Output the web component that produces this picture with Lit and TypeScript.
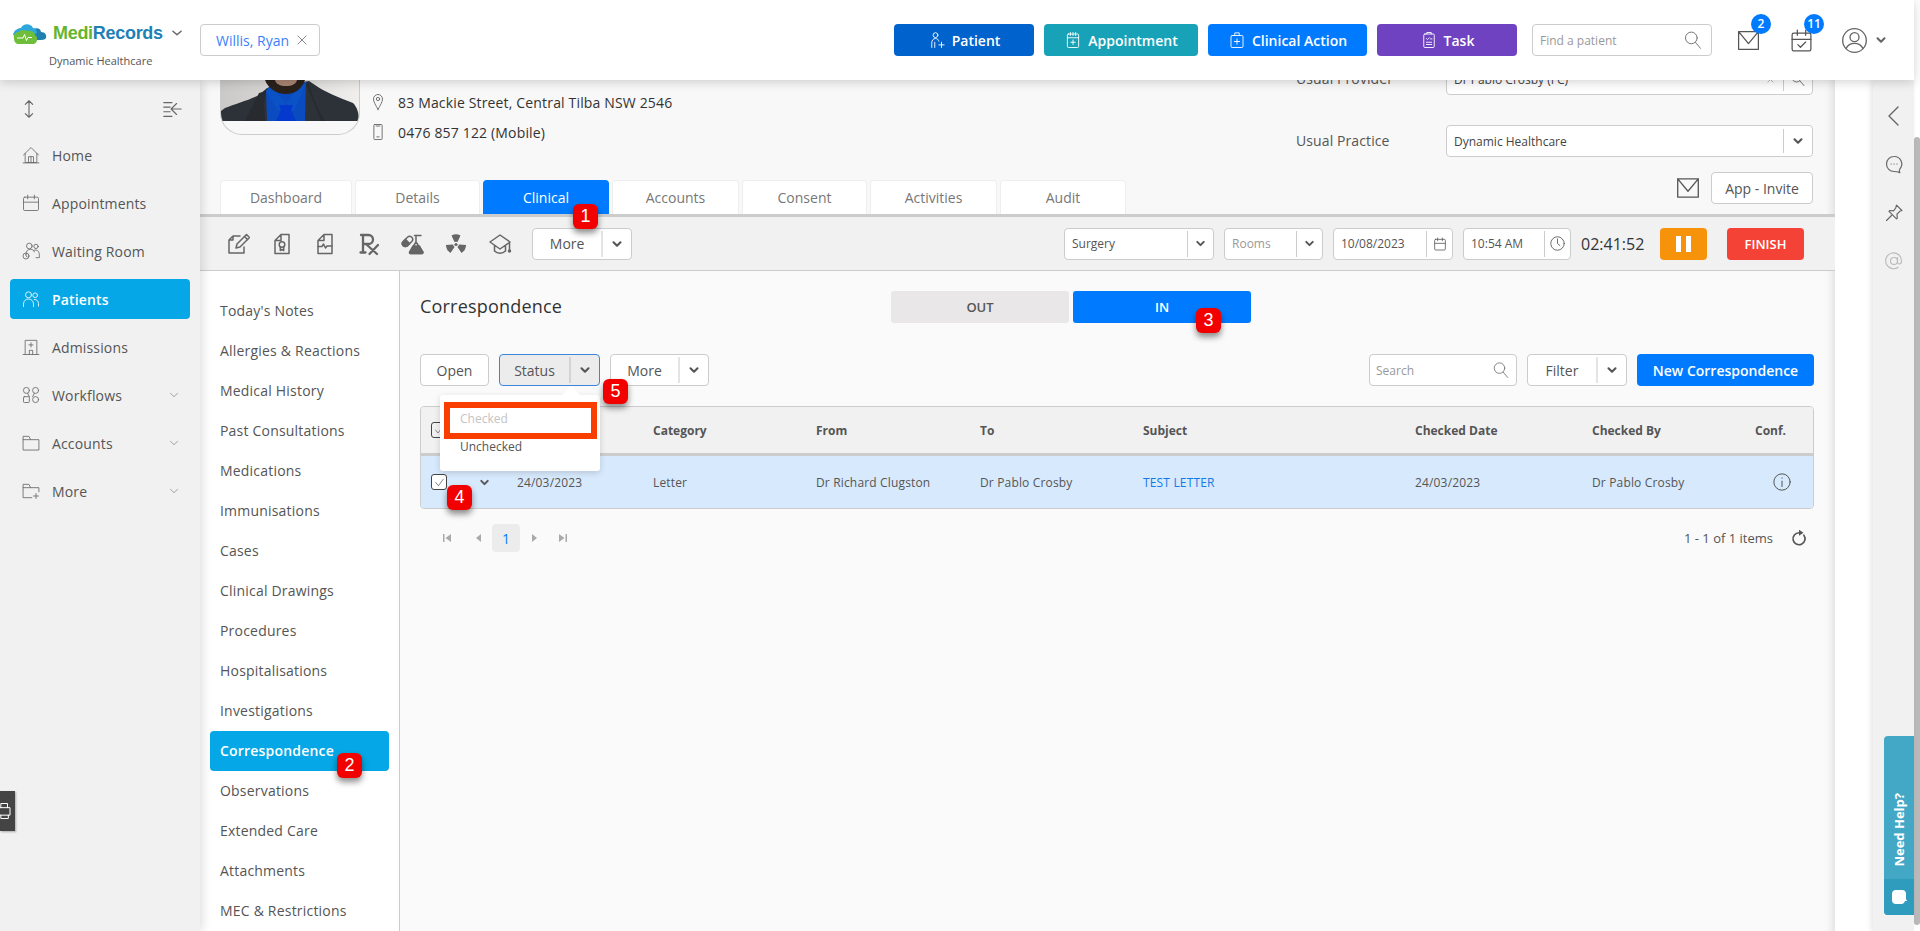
import { LitElement, html, css, svg } from "lit";
import { customElement } from "lit/decorators.js";

const ico = (body: unknown, size = 24, cls = "") => html`<svg class="ic ${cls}" width=${size} height=${size} viewBox="0 0 24 24" fill="none" stroke="currentColor" stroke-width="1.2" stroke-linecap="round" stroke-linejoin="round">${body}</svg>`;

const blade = "M7.500 3.500Q12 1 16.500 3.500L13.500 10Q12 9.400 10.500 10Z";

const P = {
  updown: svg`<path d="M12 3v18M8 7l4-4 4 4M8 17l4 4 4-4"/>`,
  collapse: svg`<path d="M3 5h9M3 10h7M3 15h7M3 20h9M22 12H12M17 6l-6 6 6 6"/>`,
  home: svg`<path d="M3 12 12 3l9 9M5 10v11h14V10M9 21v-7h6v7M12 14v7"/><path d="M2.5 21.5h19"/>`,
  cal: svg`<rect x="3" y="5" width="18" height="16" rx="1.5"/><path d="M3 11h18M8 2.5V7M16 2.5V7"/>`,
  wait: svg`<circle cx="10" cy="6" r="3.4"/><circle cx="18" cy="6.5" r="2.6"/><path d="M6 16c0-4 2-6 5-6s4.5 1 5 3M16 11c3-1 6 1 6 6v3h-4"/><circle cx="6" cy="18" r="3.6"/><path d="M6 16v2l1.5 1"/>`,
  pat: svg`<circle cx="9" cy="7" r="3.6"/><circle cx="17" cy="7.5" r="2.8"/><path d="M3 21v-3c0-4 3-6 6-6s6 2 6 6v3M16 12.5c3 0 5 2 5 5v3"/>`,
  adm: svg`<path d="M5 21V4h14v17M2.5 21h19M10 21v-5h4v5M12 7v5M9.5 9.5h5"/>`,
  flow: svg`<circle cx="6.5" cy="6.5" r="3.6"/><circle cx="17.5" cy="6.5" r="3.6"/><rect x="3" y="14" width="7" height="7" rx="1"/><circle cx="17.5" cy="17.5" r="3.6"/><path d="M8 10l2 4M16 10l-2 4"/>`,
  folder: svg`<path d="M2.5 20V4h7l2 4h10v12zM2.5 8h9"/>`,
  folderPlus: svg`<path d="M13 20H2.5V4h7l2 4h10v5M2.5 8h9M18 15v6M15 18h6"/>`,
  pin: svg`<path d="M12 22c-3-6-6-10-6-14a6 6 0 0 1 12 0c0 4-3 8-6 14z"/><circle cx="12" cy="8" r="2.2"/>`,
  phone: svg`<rect x="6.5" y="2" width="11" height="20" rx="1"/><path d="M10.5 18.5h3M9.5 4h5"/>`,
  chev: svg`<path d="M6 9l6 6 6-6"/>`,
  x: svg`<path d="M5 5l14 14M19 5 5 19"/>`,
  search: svg`<circle cx="10" cy="9.5" r="7"/><path d="M15 15l6 7"/>`,
  patAdd: svg`<circle cx="10" cy="5.5" r="3.2"/><path d="M5 22v-6c0-3.5 2-6 5-6 2.500 0 4 1.500 4.500 3.500M9 22v-7M18 15v7M14.500 18.500h7"/>`,
  appt: svg`<rect x="4.500" y="4" width="15" height="18" rx="1.500"/><path d="M4.500 9h15M8.500 2v4M12 2v4M15.500 2v4M12 12v6M9 15h6"/>`,
  clin: svg`<rect x="4" y="6" width="16" height="16" rx="1.500"/><path d="M9 6V2.500h6V6M12 10.500v7M8.500 14h7"/>`,
  task: svg`<rect x="5" y="4" width="14" height="18" rx="1.500"/><path d="M9 4V2h6v2M8.500 10l1.500 1.500 2.500-2.500M14 10.500h2M8.500 15h7M8.500 18h7"/>`,
  mail: svg`<path d="M2.500 3.500h19v17h-19zM2.500 3.500 12 15l9.500-11.500"/>`,
  taskDone: svg`<rect x="3" y="5" width="18" height="17" rx="1.500"/><path d="M3 11h18M8 2v5M16 2v5M8.500 16l2.500 2.500 5-5"/>`,
  user: svg`<circle cx="12" cy="12" r="10.500"/><circle cx="12" cy="9" r="4"/><path d="M4.500 19c1.500-3 4.500-4.500 7.500-4.500s6 1.500 7.500 4.500"/>`,
  clock: svg`<circle cx="12" cy="12" r="9.500"/><path d="M12 5.500V12l3.500 3"/>`,
  note: svg`<path d="M14 4H7L3 8v13h15v-6M7 4v4H3"/><path d="M10 16l1-4 9.500-9.500 3 3L14 15z" /><path d="M18.500 4.500l3 3"/>`,
  cert: svg`<path d="M11 2.500h8v19H5V8.500zM11 2.500v6H5"/><circle cx="12" cy="12.500" r="2.800"/><path d="M10.300 15v3.500l1.700-1 1.700 1V15"/>`,
  report: svg`<path d="M11 2.500h8v19H5V8.500zM11 2.500v6H5"/><path d="M5 14.500h4l1.500-2.500 2 4 1.500-2H19"/>`,
  rx: svg`<path d="M4 3h7.500a4.500 4.500 0 0 1 0 9H6M6 3v17.500M3.500 20.500h5M9 12l11 10M21 13l-8.500 9" stroke-width="2.300"/>`,
  flask: svg`<path d="M13.500 3.500h6.500M15 3.500v6.500L21.800 20a1 1 0 0 1-.8 1.500H9.500a1 1 0 0 1-.8-1.500l6.300-10"/><path d="M12 14h6.500l3.500 6.500-.8 1H9l-.5-1z" fill="currentColor"/><g transform="rotate(-45 6.500 9.500)"><rect x="0.500" y="6.500" width="12" height="6" rx="3"/><path d="M3.500 6.500h3v6h-3a3 3 0 0 1 0-6z" fill="currentColor"/></g>`,
  rad: svg`<g fill="currentColor" stroke="none"><path d=${blade}/><path d=${blade} transform="rotate(120 12 12.500)"/><path d=${blade} transform="rotate(240 12 12.500)"/><circle cx="12" cy="12.500" r="1.600"/></g>`,
  grad: svg`<path d="M12 3 2 10l10 7 10-7zM6.500 13.500V19c3 3 8 3 11 0v-5.500M21.500 10.500v7"/><circle cx="21.500" cy="19" r="1" fill="currentColor"/>`,
  calSmall: svg`<rect x="4" y="5" width="16" height="16" rx="1.500"/><path d="M4 11h16M8.500 3v4M15.500 3v4"/>`,
  info: svg`<circle cx="12" cy="12" r="9.800"/><path d="M12 11v6.500M12 7v.5"/>`,
  refresh: svg`<path d="M18.500 8.300A8 8 0 1 1 12 5" stroke-width="2.200"/><path d="M12 1v8l6-4z" fill="currentColor" stroke="none"/>`,
  left: svg`<path d="M16 3 7 12l9 9"/>`,
  chat: svg`<path d="M12 3a9 9 0 1 0 0 18c2.500 0 4 0 7 1.500-1-2-1-3 0-4.500A9 9 0 0 0 12 3z"/><path d="M8.500 12h.2M12 12h.2M15.500 12h.2"/>`,
  pushpin: svg`<path d="M15 2.500 21.500 9l-2.500 1-3.500 3.500.5 4.500-1 1-9-9 1-1 4.500.5L14 6z"/><path d="M9 15l-6 6"/>`,
  at: svg`<circle cx="12" cy="12" r="4.200"/><path d="M16.200 8v5.500c0 3 4.800 3 4.800-1.500a9.500 9.500 0 1 0-4 7.500"/>`,
  print: svg`<rect x="3" y="8" width="15" height="9" /><path d="M7 8V3h8v5M7 17v4h9v-4"/>`,
};

const mainNav: [string, keyof typeof P, boolean, boolean][] = [
  ["Home", "home", false, false],
  ["Appointments", "cal", false, false],
  ["Waiting Room", "wait", false, false],
  ["Patients", "pat", true, false],
  ["Admissions", "adm", false, false],
  ["Workflows", "flow", false, true],
  ["Accounts", "folder", false, true],
  ["More", "folderPlus", false, true],
];
const clinNav = ["Today's Notes", "Allergies & Reactions", "Medical History", "Past Consultations", "Medications", "Immunisations", "Cases", "Clinical Drawings", "Procedures", "Hospitalisations", "Investigations", "Correspondence", "Observations", "Extended Care", "Attachments", "MEC & Restrictions"];
const tabs: [string, number][] = [["Dashboard", 132], ["Details", 125], ["Clinical", 126], ["Accounts", 127], ["Consent", 125], ["Activities", 127], ["Audit", 126]];
const actions: [string, keyof typeof P, string][] = [["Patient", "patAdd", "a1"], ["Appointment", "appt", "a2"], ["Clinical Action", "clin", "a3"], ["Task", "task", "a4"]];

const split = (label: string, cls = "") => html`<div class="split ${cls}"><span class="lab">${label}</span><span class="car">${ico(P.chev, 14, "bold")}</span></div>`;
const field = (label: string, w: string, extra: unknown = null, cls = "") => html`<div class="field ${w} ${cls}"><span class="val">${label}</span>${extra}</div>`;

@customElement("app-root")
export class AppRoot extends LitElement {
  static styles = css`
    :host { display: block; width: 1920px; height: 931px; overflow: hidden; font-family: "Open Sans", sans-serif; color: #555; background: #fff; position: relative; font-size: 14px; }
    * { box-sizing: border-box; }
    .ic { display: block; flex: none; }
    .ic.bold { stroke-width: 3.6; }
    .page { display: flex; height: 931px; }
    .left { width: 1914px; display: flex; flex-direction: column; }
    .strip { width: 6px; padding: 137px 0 6px; }
    .thumb { height: 100%; background: #b9b9b9; border-radius: 3px; }

    header { height: 80px; flex: none; background: #fff; box-shadow: 0 2px 10px rgba(0,0,0,.18); position: relative; z-index: 5; display: flex; align-items: center; padding: 0 26px 0 11px; }
    .brand { width: 189px; height: 48px; position: relative; flex: none; }
    .logoRow { display: flex; align-items: center; height: 26px; margin-top: 0; }
    .logoName { font: bold 18px/26px "Liberation Sans", Arial, sans-serif; letter-spacing: -.3px; margin-left: 6px; color: #1f80b6; }
    .logoName b { color: #64b52f; }
    .logoChev { color: #666; margin-left: 7px; }
    .sub { font-size: 11px; line-height: 14px; color: #555; margin: 8px 0 0 38px; }
    .brandIn { margin-top: 4px; }
    .ptag { width: 120px; height: 32px; border: 1px solid #ccc; border-radius: 4px; display: flex; align-items: center; padding-left: 15px; gap: 6px; color: #3a7ffb; font-size: 14px; }
    .ptag .ic { color: #555; }
    .actions { margin-left: auto; display: flex; gap: 10px; }
    .act { height: 32px; border-radius: 4px; color: #fff; font-weight: 600; font-size: 14px; display: flex; align-items: center; justify-content: center; gap: 6px; }
    .a1 { width: 140px; background: #0062cc; } .a2 { width: 154px; background: #17a2b8; } .a3 { width: 159px; background: #007bff; } .a4 { width: 140px; background: #6f42c1; }
    .find { width: 180px; height: 32px; margin-left: 15px; border: 1px solid #ccc; border-radius: 4px; display: flex; align-items: center; justify-content: space-between; padding: 0 8px 0 7px; font-size: 12px; color: #999; }
    .find .ic { color: #777; }
    .notif { position: relative; margin-left: 24px; color: #555; }
    .notif.second { margin-left: 28px; }
    .count { position: absolute; top: -14px; right: -10px; min-width: 20px; height: 20px; border-radius: 10px; background: #007bff; color: #fff; font-size: 12px; font-weight: 600; display: flex; align-items: center; justify-content: center; }
    .userBox { display: flex; align-items: center; margin-left: 27px; color: #666; gap: 6px; }

    .body { flex: 1; display: flex; min-height: 0; }
    .side { width: 200px; flex: none; background: #f1f1f1; box-shadow: 2px 0 10px rgba(0,0,0,.14); position: relative; z-index: 3; padding-top: 16px; }
    .sideTop { display: flex; justify-content: space-between; padding: 0 17px 0 18px; color: #666; margin-bottom: 13px; height: 26px; align-items: center; }
    .nav { height: 40px; margin: 0 10px 8px; border-radius: 4px; display: flex; align-items: center; padding: 0 10px 0 11px; gap: 11px; font-size: 14px; font-weight: 500; letter-spacing: .15px; color: #555; }
    .nav .ic { color: #666; stroke-width: 1; }
    .nav.on { background: #05a7e6; color: #fff; font-weight: 600; }
    .nav.on .ic { color: #fff; }
    .nav .more { margin-left: auto; color: #888; margin-right: -1px; }
    .gadget { position: absolute; left: 0; top: 711px; width: 15px; height: 40px; background: #444; color: #fff; overflow: hidden; box-shadow: 1px 1px 2px rgba(0,0,0,.3); display: flex; align-items: center; justify-content: flex-end; }

    main { width: 1635px; flex: none; background: #f8f8f8; display: flex; flex-direction: column; box-shadow: inset -10px 0 10px -8px rgba(0,0,0,.12); }
    .pat { height: 100px; flex: none; display: flex; padding-left: 20px; }
    .photo { width: 140px; height: 55px; border: 1px solid #ccc; border-top: 0; border-radius: 0 0 22px 22px; overflow: hidden; flex: none; }
    .photo svg { display: block; }
    .contact { margin-left: 9px; padding-top: 7px; color: #333; font-weight: 500; letter-spacing: .16px; }
    .cl { height: 30px; display: flex; align-items: center; gap: 11px; }
    .cl .ic { color: #666; }
    .form { margin-left: auto; margin-right: 22px; margin-top: -17px; width: 517px; display: flex; flex-direction: column; gap: 30px; }
    .frow { display: flex; align-items: center; justify-content: space-between; height: 32px; font-size: 14px; font-weight: 500; letter-spacing: .1px; color: #555; }
    .frow > span { padding-bottom: 2px; }
    .sel { width: 367px; height: 32px; border: 1px solid #ccc; border-radius: 4px; background: #fff; display: flex; align-items: center; padding-left: 7px; font-size: 12px; color: #444; letter-spacing: 0; }
    .sel .grow { flex: 1; }
    .sel .x { color: #666; margin-right: 8px; }
    .sel .tail { width: 29px; height: 24px; border-left: 1px solid #ccc; display: flex; align-items: center; justify-content: center; color: #555; }
    .tabsRow { height: 36px; flex: none; display: flex; padding-left: 20px; gap: 3px; border-bottom: 3px solid #ccc; padding-top: 0; position: relative; box-sizing: content-box; height: 34px; }
    .tab { height: 34px; background: #fff; border: 1px solid #eee; border-bottom: 0; border-radius: 4px 4px 0 0; display: flex; align-items: center; justify-content: center; color: #777; }
    .tab.on { background: #007bff; color: #fff; border-color: #007bff; font-weight: 500; }
    .invite { margin-left: auto; margin-right: 22px; margin-top: -8px; height: 32px; display: flex; gap: 10px; align-items: center; }
    .invite .ic { color: #555; }
    .btn { height: 32px; border: 1px solid #ccc; border-radius: 4px; background: #fff; display: flex; align-items: center; justify-content: center; color: #555; font-weight: 500; }
    .invBtn { width: 102px; }
    .tools { height: 54px; flex: none; background: #f1f1f1; border-bottom: 1px solid #ccc; display: flex; align-items: center; padding: 0 31px 0 26px; }
    .toolIcons { display: flex; gap: 19.7px; color: #666; }
    .toolIcons .ic { stroke-width: 1.5; }
    .split { height: 32px; background: #fff; border: 1px solid #ccc; border-radius: 4px; display: flex; align-items: center; font-weight: 500; color: #555; }
    .split .lab { flex: 1; text-align: center; }
    .split .car { width: 30px; height: 26px; border-left: 2px solid #e4e4e4; display: flex; align-items: center; justify-content: center; color: #555; }
    .tm { width: 100px; margin-left: 20px; }
    .rt { margin-left: auto; display: flex; align-items: center; gap: 10px; }
    .field { height: 32px; background: #fff; border: 1px solid #ccc; border-radius: 4px; display: flex; align-items: center; padding-left: 7px; font-size: 12px; color: #555; }
    .field .val { flex: 1; }
    .field .tail { width: 26px; height: 26px; border-left: 1px solid #ccc; display: flex; align-items: center; justify-content: center; color: #555; }
    .w150 { width: 150px; } .w99 { width: 99px; } .w120 { width: 120px; } .w108 { width: 108px; }
    .muted .val { color: #999; }
    .timer { width: 64px; font-size: 16px; font-weight: 500; color: #333; white-space: nowrap; }
    .pause { width: 47px; height: 32px; background: #f7930a; border-radius: 4px; display: flex; align-items: center; justify-content: center; gap: 5px; margin-left: 5px; }
    .pause i { width: 5px; height: 16px; background: #fff; display: block; }
    .finish { width: 77px; height: 32px; background: #f44336; border-radius: 4px; color: #fff; font-weight: 600; font-size: 13px; display: flex; align-items: center; justify-content: center; margin-left: 10px; }

    .work { flex: 1; display: flex; min-height: 0; }
    .cnav { width: 200px; flex: none; background: #fff; border-right: 1px solid #ccc; padding-top: 20px; box-shadow: none; }
    .ci { height: 40px; margin: 0 10px; padding: 0 0 1px 10px; display: flex; align-items: center; border-radius: 4px; font-size: 14px; font-weight: 500; letter-spacing: .2px; color: #555; white-space: nowrap; }
    .ci.on { background: #05a7e6; color: #fff; font-weight: 600; }
    .cont { flex: 1; padding: 20px 21px 0 20px; position: relative; background: #fafafa; box-shadow: inset -10px 0 10px -8px rgba(0,0,0,.12); }
    .ttl { display: flex; align-items: center; height: 32px; gap: 4px; }
    .ttl h2 { margin: 0 0 2px; width: 467px; font-size: 18px; font-weight: 500; color: #333; letter-spacing: .2px; }
    .seg { width: 178px; height: 32px; border-radius: 3px; display: flex; align-items: center; justify-content: center; font-size: 13px; font-weight: 600; }
    .seg.off { background: #e9e7e7; color: #555; }
    .seg.onn { background: #007bff; color: #fff; }
    .bar { display: flex; margin-top: 31px; height: 32px; gap: 10px; position: relative; }
    .open { width: 69px; }
    .stat { width: 101px; background: #ececec; border-color: #3b86d8; }
    .stat .car { border-left-color: #d3d3d3; }
    .mor { width: 99px; }
    .tsearch { width: 148px; height: 32px; margin-left: auto; background: #fff; border: 1px solid #ccc; border-radius: 4px; display: flex; align-items: center; justify-content: space-between; padding: 0 6px; font-size: 12px; color: #999; }
    .tsearch .ic { color: #777; }
    .filt { width: 100px; }
    .newc { width: 177px; height: 32px; border-radius: 4px; background: #007bff; color: #fff; font-weight: 600; display: flex; align-items: center; justify-content: center; font-size: 14px; }
    .tbl { margin-top: 20px; border: 1px solid #ccc; border-radius: 4px; overflow: hidden; }
    .tr { display: grid; grid-template-columns: 45px 41px 136px 163px 164px 163px 272px 177px 163px 1fr; padding-left: 10px; align-items: center; font-size: 12px; color: #555; }
    .th { height: 49px; background: #f1f1f1; border-bottom: 3px solid #ccc; font-weight: 700; color: #555; }
    .td { height: 52px; background: #d7e9fc; font-weight: 500; letter-spacing: .16px; }
    .cb { width: 16px; height: 16px; border: 1px solid #444; border-radius: 3px; background: #fff; color: #444; display: flex; align-items: center; justify-content: center; }
    .th .cb { background: transparent; }
    .rowCh { margin-left: 2px; display: block; }
    .lnk { color: #1479e6; }
    .infoI { color: #555; margin-left: 17px; }
    .pg { display: flex; align-items: center; margin-top: 15px; height: 28px; color: #aaa; font-size: 12px; padding-left: 20px; }
    .pgI { width: 14px; display: flex; align-items: center; justify-content: center; }
    .pgI svg { display: block; }
    .pgGap { margin-left: 17px; }
    .pgGap2 { margin-left: 14px; }
    .pg1 { width: 28px; height: 28px; background: #ececec; border-radius: 4px; color: #007bff; font-size: 14px; display: flex; align-items: center; justify-content: center; margin: 0 8px 0 7px; }
    .cnt { margin-left: auto; color: #555; font-size: 13px; font-weight: 500; margin-right: 17px; }
    .rf { color: #555; margin-right: 6px; }

    .menu { position: absolute; left: 40px; top: 124px; width: 160px; height: 76px; background: #fff; border-radius: 3px; box-shadow: 0 2px 6px rgba(0,0,0,.15); padding: 7px 3px 7px 4px; font-size: 12px; font-weight: 500; z-index: 2; }
    .menu::before { content: ""; position: absolute; left: 122px; top: -9px; border-left: 9px solid transparent; border-right: 9px solid transparent; border-bottom: 9px solid #fff; }
    .mchk { height: 37px; border: 6px solid #fa3e00; padding: 0 0 4px 10px; color: #c4c4c4; display: flex; align-items: center; }
    .munc { height: 18px; margin-top: -2px; padding-left: 16px; display: flex; align-items: center; color: #555; }

    .gap { width: 38px; flex: none; background: #fff; }
    .rail { width: 41px; flex: none; background: #f1f1f1; box-shadow: -2px 0 5px rgba(0,0,0,.1); display: flex; flex-direction: column; align-items: center; padding-top: 24px; color: #666; position: relative; z-index: 1; }
    .rail .ic { stroke-width: 1.4; }
    .rail .ic + .ic { margin-top: 28.5px; }
    .rail .first { margin-bottom: -2.5px; }
    .rail .fade { color: #bbb; }
    .help { margin-top: auto; margin-bottom: 16px; align-self: flex-end; width: 30px; height: 179px; flex: none; background: #43a7c6; border-radius: 4px 0 0 4px; display: flex; flex-direction: column; color: #fff; overflow: hidden; }
    .helpT { flex: 1; display: flex; align-items: flex-end; justify-content: center; padding-bottom: 12px; }
    .helpT span { writing-mode: vertical-rl; transform: rotate(180deg); font-size: 13px; font-weight: 700; white-space: nowrap; }
    .helpB { height: 36px; background: #2f9bbd; display: flex; align-items: center; justify-content: center; }

    .mark { position: absolute; width: 25px; height: 25px; border-radius: 6px; background: #f20000; color: #fff; font: 18px/25px "Liberation Sans", Arial, sans-serif; text-align: center; box-shadow: 0 4px 6px rgba(0,0,0,.45); z-index: 4; }
    .m1 { left: 573px; top: 204px; } .m2 { left: 337px; top: 753px; } .m3 { left: 1196px; top: 308px; } .m4 { left: 447px; top: 485px; } .m5 { left: 603px; top: 379px; }
  `;

  render() {
    return html`
      <div class="page">
        <div class="left">
          <header>
            <div class="brand"><div class="brandIn">
              <div class="logoRow">
                <svg width="36" height="21" viewBox="0 0 36 21"><path d="M23 6c3-2 7 0 7 3 4 0 6 3 5 6-1 2-4 2-8 2H20z" fill="#1f7fb0"/><path d="M2 12C3 7 7 5 10 5c2-5 10-5 12 0 2 0 4 2 4 5l-4 2H4z" fill="#2ea7dc"/><path d="M3 15c-1-3 1-6 5-6 1-2 5-3 8-1 4-1 8 1 8 4 3 1 3 8-1 9H8c-3 0-5-2-5-6z" fill="#6fbe3a"/><path d="M6 15h6l1.500-3.500 2 6 1.500-3h4" fill="none" stroke="#fff" stroke-width="1"/></svg>
                <span class="logoName"><b>Medi</b>Records</span>
                <span class="logoChev">${ico(svg`<path d="M5 9l7 6 7-6" stroke-width="2.600"/>`, 14)}</span>
              </div>
              <div class="sub">Dynamic Healthcare</div>
            </div></div>
            <div class="ptag">Willis, Ryan ${ico(P.x, 14)}</div>
            <div class="actions">${actions.map(([t, i, c]) => html`<div class="act ${c}">${ico(P[i], 18)}${t}</div>`)}</div>
            <div class="find">Find a patient ${ico(P.search, 20)}</div>
            <div class="notif">${ico(P.mail, 25)}<span class="count">2</span></div>
            <div class="notif second">${ico(P.taskDone, 25)}<span class="count">11</span></div>
            <div class="userBox">${ico(P.user, 27)}${ico(P.chev, 14, "bold")}</div>
          </header>
          <div class="body">
            <aside class="side">
              <div class="sideTop">${ico(P.updown, 22)}${ico(P.collapse, 22)}</div>
              ${mainNav.map(([t, i, on, more]) => html`<div class="nav ${on ? "on" : ""}">${ico(P[i], 20)}<span>${t}</span>${more ? html`<span class="more">${ico(P.chev, 14)}</span>` : null}</div>`)}
              <div class="gadget">${ico(P.print, 20)}</div>
            </aside>
            <main>
              <div class="pat">
                <div class="photo">
                  <svg width="138" height="41" viewBox="0 0 138 41">
                    <defs><linearGradient id="bgp" x1="0" x2="1" y1="0" y2="0"><stop offset="0" stop-color="#cbc9c7"/><stop offset=".45" stop-color="#dbd9d7"/><stop offset="1" stop-color="#f0efee"/></linearGradient></defs>
                    <rect width="138" height="41" fill="url(#bgp)"/>
                    <path d="M0 41V31l4-3c10-4 24-8 34-13l8-7 42-7 6 4c8 6 25 13 38 18 4 4 6 10 6 18z" fill="#2c3238"/>
                    <path d="M45 11 L46 41H84L85 3 75 8 58 8z" fill="#0a4cc0"/>
                    <path d="M45 11l4-6 16 18-8 8zM86 2l-5 1-16 20 8 8z" fill="#0a52c6"/>
                    <path d="M44 0h40c-3 8-9 14-19 14S47 8 44 0z" fill="#2a211b"/>
                    <path d="M54 0h22c-1 4-5 6-11 6S55 4 54 0z" fill="#a98572"/>
                    <path d="M58 25h14l-2 5 5 11H55l5-11z" fill="#0538cc"/>
                    <path d="M24 41l14-28 7-2-2 14 1 16zM100 41l-15-38 2 0c4 10 8 24 17 38z" fill="#272b30"/>
                  </svg>
                </div>
                <div class="contact">
                  <div class="cl">${ico(P.pin, 18)}<span>83 Mackie Street, Central Tilba NSW 2546</span></div>
                  <div class="cl">${ico(P.phone, 18)}<span>0476 857 122 (Mobile)</span></div>
                </div>
                <div class="form">
                  <div class="frow"><span>Usual Provider</span><div class="sel"><span class="grow">Dr Pablo Crosby (FC)</span><span class="x">${ico(P.x, 9)}</span><span class="tail">${ico(P.search, 16)}</span></div></div>
                  <div class="frow"><span>Usual Practice</span><div class="sel"><span class="grow">Dynamic Healthcare</span><span class="tail">${ico(P.chev, 14, "bold")}</span></div></div>
                </div>
              </div>
              <div class="tabsRow">
                ${tabs.map(([t, w]) => html`<div class="tab ${t === "Clinical" ? "on" : ""}" style="width:${w}px">${t}</div>`)}
                <div class="invite">${ico(P.mail, 26)}<div class="btn invBtn">App - Invite</div></div>
              </div>
              <div class="tools">
                <div class="toolIcons">
                  ${[P.note, P.cert, P.report, P.rx, P.flask, P.rad, P.grad].map((p) => ico(p, 24))}
                </div>
                <div class="tm">${split("More")}</div>
                <div class="rt">
                  ${field("Surgery", "w150", html`<span class="tail">${ico(P.chev, 13, "bold")}</span>`)}
                  ${field("Rooms", "w99", html`<span class="tail">${ico(P.chev, 13, "bold")}</span>`, "muted")}
                  ${field("10/08/2023", "w120", html`<span class="tail">${ico(P.calSmall, 16)}</span>`)}
                  ${field("10:54 AM", "w108", html`<span class="tail">${ico(P.clock, 17)}</span>`)}
                  <span class="timer">02:41:52</span>
                  <div class="pause"><i></i><i></i></div>
                  <div class="finish">FINISH</div>
                </div>
              </div>
              <div class="work">
                <div class="cnav">${clinNav.map((c) => html`<div class="ci ${c === "Correspondence" ? "on" : ""}">${c}</div>`)}</div>
                <div class="cont">
                  <div class="ttl"><h2>Correspondence</h2><div class="seg off">OUT</div><div class="seg onn">IN</div></div>
                  <div class="bar">
                    <div class="btn open">Open</div>
                    ${split("Status", "stat")}
                    ${split("More", "mor")}
                    <div class="tsearch">Search ${ico(P.search, 18)}</div>
                    ${split("Filter", "filt")}
                    <div class="newc">New Correspondence</div>
                  </div>
                  <div class="tbl">
                    <div class="tr th">
                      <span class="cb">${ico(svg`<path d="M5 12l5 6 9-12"/>`, 12)}</span><span></span><span></span>
                      <span>Category</span><span>From</span><span>To</span><span>Subject</span><span>Checked Date</span><span>Checked By</span><span>Conf.</span>
                    </div>
                    <div class="tr td">
                      <span class="cb">${ico(svg`<path d="M5 12l5 6 9-12"/>`, 13)}</span>
                      <span class="rowCh">${ico(P.chev, 13, "bold")}</span>
                      <span>24/03/2023</span><span>Letter</span><span>Dr Richard Clugston</span><span>Dr Pablo Crosby</span>
                      <span class="lnk">TEST LETTER</span><span>24/03/2023</span><span>Dr Pablo Crosby</span>
                      <span class="infoI">${ico(P.info, 20)}</span>
                    </div>
                  </div>
                  <div class="pg">
                    <span class="pgI"><svg width="10" height="10" viewBox="0 0 10 10" fill="currentColor"><path d="M1 1h1.500v8H1zM9 1v8L3.500 5z"/></svg></span>
                    <span class="pgI pgGap"><svg width="8" height="10" viewBox="0 0 8 10" fill="currentColor"><path d="M7 1v8L2 5z"/></svg></span>
                    <span class="pg1">1</span>
                    <span class="pgI"><svg width="8" height="10" viewBox="0 0 8 10" fill="currentColor"><path d="M1 1v8l5-4z"/></svg></span>
                    <span class="pgI pgGap2"><svg width="10" height="10" viewBox="0 0 10 10" fill="currentColor"><path d="M9 1H7.500v8H9zM1 1v8l5.500-4z"/></svg></span>
                    <span class="cnt">1 - 1 of 1 items</span>
                    <span class="rf">${ico(P.refresh, 18)}</span>
                  </div>
                  <div class="menu"><div class="mchk">Checked</div><div class="munc">Unchecked</div></div>
                </div>
              </div>
            </main>
            <div class="gap"></div>
            <div class="rail">
              ${ico(P.left, 24, "first")}
              ${ico(P.chat, 20)}
              ${ico(P.pushpin, 20)}
              ${ico(P.at, 20, "fade")}
              <div class="help">
                <div class="helpT"><span>Need Help?</span></div>
                <div class="helpB"><svg width="15" height="15" viewBox="0 0 15 15" fill="#fff"><path d="M4 0h6a4 4 0 0 1 4 4v5l1 2-2 0a4 4 0 0 1-3 3H4a4 4 0 0 1-4-4V4a4 4 0 0 1 4-4z"/></svg></div>
              </div>
            </div>
          </div>
        </div>
        <div class="strip"><div class="thumb"></div></div>
      </div>
      <div class="mark m1">1</div><div class="mark m2">2</div><div class="mark m3">3</div><div class="mark m4">4</div><div class="mark m5">5</div>
    `;
  }
}
